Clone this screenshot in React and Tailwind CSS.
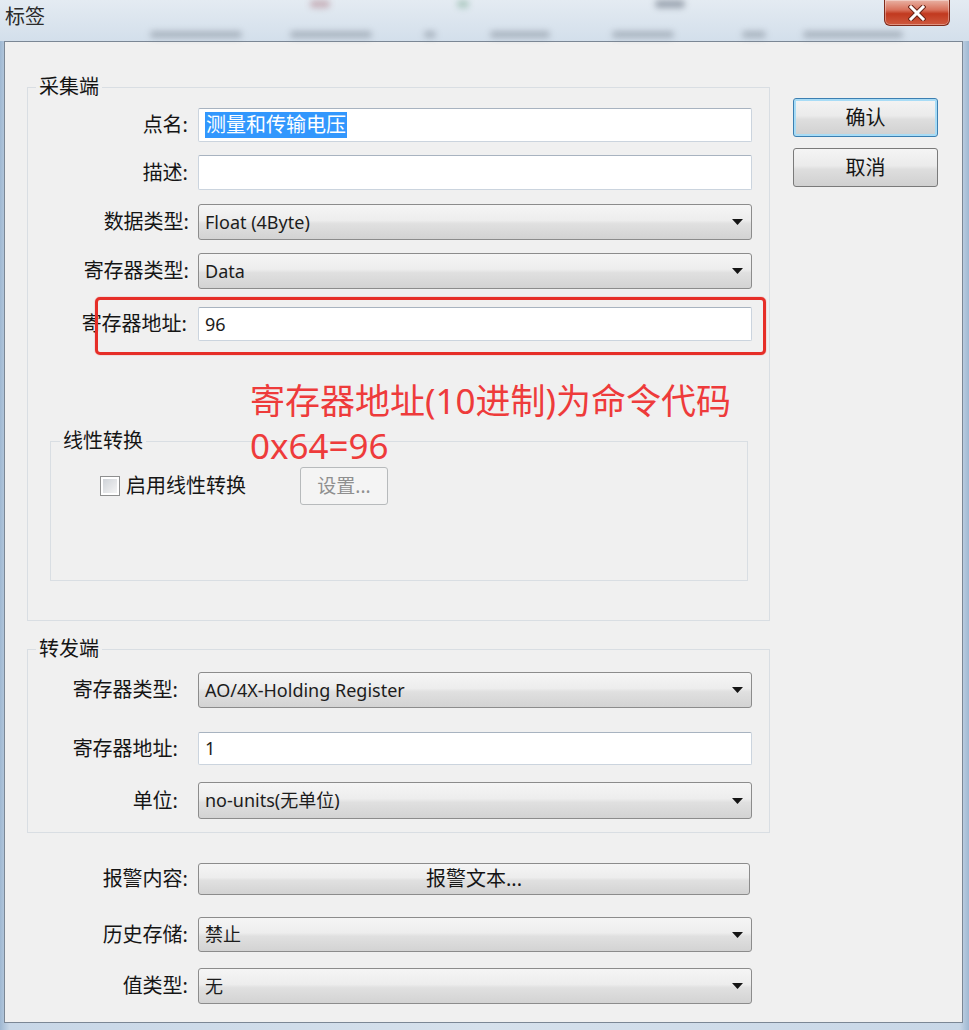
import React from 'react';

const smears = [
  'left-[150px] top-[31px] w-[92px] h-[7px]',
  'left-[290px] top-[31px] w-[82px] h-[7px]',
  'left-[424px] top-[31px] w-[12px] h-[7px]',
  'left-[490px] top-[31px] w-[60px] h-[7px]',
  'left-[612px] top-[31px] w-[62px] h-[7px]',
  'left-[742px] top-[31px] w-[24px] h-[7px]',
  'left-[803px] top-[31px] w-[100px] h-[7px]',
];

function Arrow() {
  return (
    <svg width="11" height="6" viewBox="0 0 11 6">
      <path d="M0 0H11L5.5 6Z" fill="#151515" />
    </svg>
  );
}

function Combo({ h, value }) {
  return (
    <div className={`flex items-center w-[554px] ${h} rounded-[3px] border border-[#8c8c8c] bg-[linear-gradient(to_bottom,#f5f5f5_0%,#ededed_45%,#e0e0e0_55%,#d3d3d3_100%)] pl-[6px] pr-[8px] text-[18px] text-[#1c1c1c]`}>
      <span className="flex-1 whitespace-nowrap">{value}</span>
      <Arrow />
    </div>
  );
}

function TextBox({ h, children }) {
  return (
    <div className={`flex items-center w-[554px] ${h} rounded-[2px] border border-[#cbd4de] border-t-[#a8b3c0] bg-white pl-[6px] text-[18px] text-[#1c1c1c]`}>
      {children}
    </div>
  );
}

function Row({ label, pad, className, children }) {
  return (
    <div className={`flex items-center ${className}`}>
      <div className={`w-[170px] text-right text-[20px] leading-[24px] text-[#151515] whitespace-nowrap ${pad}`}>{label}</div>
      {children}
    </div>
  );
}

export default function App() {
  return (
    <div className="w-[969px] h-[1030px] overflow-hidden bg-[linear-gradient(to_right,#9fb8d2,#c8d7e7_1%,#d6e1ec_50%,#c8d7e7_99%,#9fb8d2)] font-['Noto_Sans','Noto_Sans_CJK_SC',sans-serif] text-[#151515]">
      {/* aero title bar */}
      <div className="relative h-[41px] flex items-start justify-between bg-[linear-gradient(to_bottom,#e4ebf2,#d3dfeb)]">
        {smears.map((s, i) => (
          <div key={i} className={`absolute ${s} rounded-full bg-[#7d8793] opacity-50 blur-[3px]`} />
        ))}
        <div className="absolute left-[310px] top-0 w-[20px] h-[8px] rounded-full bg-[#a0606a] opacity-40 blur-[3px]" />
        <div className="absolute left-[457px] top-0 w-[12px] h-[8px] rounded-full bg-[#5f9a7a] opacity-40 blur-[3px]" />
        <div className="absolute left-[655px] top-0 w-[30px] h-[8px] rounded-full bg-[#556070] opacity-50 blur-[3px]" />
        <span className="relative ml-[5px] mt-[5px] text-[20px] leading-[24px] text-[#2b2b2b]">标签</span>
        <div className="relative mr-[19px] w-[66px] h-[26px] rounded-b-[6px] border border-t-0 border-[#7e2a1a] bg-[linear-gradient(to_bottom,#e9b2a4_0%,#d8705a_40%,#c1391f_55%,#cf5a3f_100%)] flex items-center justify-center shadow-[inset_0_0_0_1px_rgba(255,255,255,0.35)]">
          <svg width="18" height="16" viewBox="0 0 18 16">
            <path d="M3 2L15 14M15 2L3 14" stroke="#6b2416" strokeWidth="5" strokeLinecap="square" />
            <path d="M3 2L15 14M15 2L3 14" stroke="#ffffff" strokeWidth="3" strokeLinecap="square" />
          </svg>
        </div>
      </div>

      {/* client area */}
      <div className="ml-[4px] mr-[6px] h-[982px] border border-[#7b8795] bg-[#f0f0f0] flex">
        <div className="ml-[22px] w-[743px] flex flex-col">
          {/* 采集端 */}
          <fieldset className="mt-[34px] border border-[#d9dee3] pb-[39px]">
            <legend className="ml-[8px] px-[3px] text-[20px] leading-[22px]">采集端</legend>
            <Row label="点名:" pad="pr-[10px]" className="mt-[10px]">
              <TextBox h="h-[34px]">
                <span className="bg-[#3297fd] text-white text-[20px] leading-[26px] px-[1px]">测量和传输电压</span>
              </TextBox>
            </Row>
            <Row label="描述:" pad="pr-[10px]" className="mt-[13px]">
              <TextBox h="h-[35px]" />
            </Row>
            <Row label="数据类型:" pad="pr-[9px]" className="mt-[14px]">
              <Combo h="h-[36px]" value="Float (4Byte)" />
            </Row>
            <Row label="寄存器类型:" pad="pr-[9px]" className="mt-[13px]">
              <Combo h="h-[36px]" value="Data" />
            </Row>
            <div className="relative mt-[18px]">
              <Row label="寄存器地址:" pad="pr-[11px]">
                <TextBox h="h-[34px]">96</TextBox>
              </Row>
              {/* annotation overlay */}
              <div className="absolute left-[67px] top-[-10px] w-[671px] h-[58px] rounded-[5px] border-[3px] border-[#e62e28] shadow-[0_0_1px_#e62e28]" />
              <div className="absolute left-[222px] top-[76px] text-[35px] text-[#ee3b3b] whitespace-nowrap">
                <div className="leading-[36px]">寄存器地址(10进制)为命令代码</div>
                <div className="leading-[36px] mt-[9px]">0x64=96</div>
              </div>
            </div>

            {/* 线性转换 */}
            <fieldset className="mt-[89px] ml-[22px] w-[698px] border border-[#d9dee3] pb-[75px]">
              <legend className="ml-[9px] px-[3px] text-[20px] leading-[22px]">线性转换</legend>
              <div className="mt-[15px] flex items-center">
                <div className="ml-[49px] w-[20px] h-[20px] border border-[#8e8f8f] bg-white p-[2px]">
                  <div className="w-full h-full bg-[linear-gradient(135deg,#cfd3d8,#f4f4f4)]" />
                </div>
                <span className="ml-[6px] text-[20px] leading-[24px]">启用线性转换</span>
                <div className="ml-[54px] w-[88px] h-[38px] rounded-[3px] border border-[#b7babc] bg-[#f4f4f4] flex items-center justify-center text-[19px] text-[#8f8f8f]">
                  设置...
                </div>
              </div>
            </fieldset>
          </fieldset>

          {/* 转发端 */}
          <fieldset className="mt-[17px] border border-[#d9dee3] pb-[13px]">
            <legend className="ml-[8px] px-[3px] text-[20px] leading-[22px]">转发端</legend>
            <Row label="寄存器类型:" pad="pr-[20px]" className="mt-[12px]">
              <Combo h="h-[36px]" value="AO/4X-Holding Register" />
            </Row>
            <Row label="寄存器地址:" pad="pr-[20px]" className="mt-[24px]">
              <TextBox h="h-[33px]">1</TextBox>
            </Row>
            <Row label="单位:" pad="pr-[20px]" className="mt-[17px]">
              <Combo h="h-[37px]" value="no-units(无单位)" />
            </Row>
          </fieldset>

          <div className="flex items-center mt-[30px]">
            <div className="w-[171px] pr-[10px] text-right text-[20px] leading-[24px]">报警内容:</div>
            <div className="w-[552px] h-[32px] rounded-[3px] border border-[#8c8c8c] bg-[linear-gradient(to_bottom,#f5f5f5_0%,#ededed_45%,#e0e0e0_55%,#d3d3d3_100%)] flex items-center justify-center text-[20px]">
              报警文本...
            </div>
          </div>
          <div className="flex items-center mt-[22px]">
            <div className="w-[171px] pr-[10px] text-right text-[20px] leading-[24px]">历史存储:</div>
            <Combo h="h-[35px]" value="禁止" />
          </div>
          <div className="flex items-center mt-[16px]">
            <div className="w-[171px] pr-[10px] text-right text-[20px] leading-[24px]">值类型:</div>
            <Combo h="h-[36px]" value="无" />
          </div>
        </div>

        {/* buttons */}
        <div className="ml-[23px] mt-[56px] flex flex-col gap-[11px]">
          <div className="w-[145px] h-[39px] rounded-[3px] border border-[#3c7fb1] shadow-[inset_0_0_0_2px_#a8dcf6] bg-[linear-gradient(to_bottom,#f4f4f4_0%,#ebebeb_45%,#dedede_55%,#d0d0d0_100%)] flex items-center justify-center text-[20px]">
            确认
          </div>
          <div className="w-[145px] h-[39px] rounded-[3px] border border-[#7a7a7a] bg-[linear-gradient(to_bottom,#f4f4f4_0%,#ebebeb_45%,#dedede_55%,#d0d0d0_100%)] flex items-center justify-center text-[20px]">
            取消
          </div>
        </div>
      </div>
    </div>
  );
}
